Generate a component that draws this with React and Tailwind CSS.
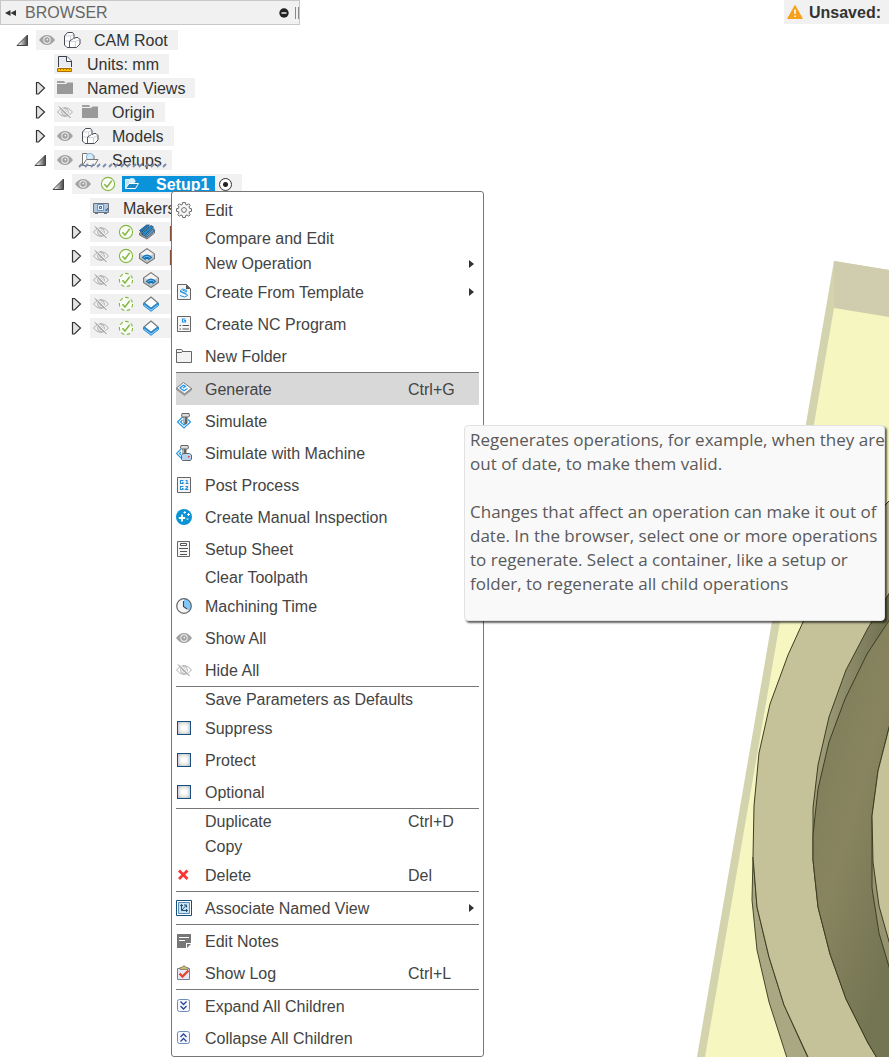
import React from "react";

/* ---------- icons ---------- */
function Svg({ children, className = "" }) {
  return (
    <svg viewBox="0 0 16 16" aria-hidden="true" className={"h-4 w-4 shrink-0 " + className}>
      {children}
    </svg>
  );
}

const Eye = () => (
  <Svg>
    <path d="M0 8 Q3.500 3 8 3 T16 8 Q12.500 13 8 13 T0 8Z" fill="#a3a3a3" />
    <circle cx="8" cy="8" r="3.700" fill="#f4f4f4" />
    <circle cx="8" cy="8" r="2.700" fill="#a0a0a0" />
    <circle cx="8.300" cy="7.600" r="0.900" fill="#f4f4f4" />
  </Svg>
);

const EyeOff = () => (
  <Svg>
    <g fill="none" stroke="#a6a6a6" strokeWidth="0.900">
      <path d="M0.500 8 Q4 3.500 8 3.500 T15.500 8 Q12 12.500 8 12.500 T0.500 8Z" />
      <circle cx="8" cy="8" r="3.400" />
      <circle cx="8" cy="8" r="1.300" />
    </g>
    <path d="M3.200 2.500L14 13.300" stroke="#f4f4f4" strokeWidth="1.200" />
    <path d="M2 2.500L13.500 14" stroke="#888" strokeWidth="1" />
  </Svg>
);

const Cubes = () => (
  <Svg className="overflow-visible">
    <path d="M0.500 4L3.500 0.500H8.500L10 2.500V6.500L12 5.500H14L16 7.500V12L12.500 15.500H3L0.500 13Z" fill="#fff" />
    <path d="M0.500 4H6.500L10 2.500M6.500 4V9.500M0.500 9H5.500M6 9.500H11.500L16 7.500M11.500 9.500V15.500" fill="none" stroke="#cfd1d6" />
    <path d="M0.500 13V4L3.500 0.500H8.500L10 2.500V6.500L12 5.500H14L16 7.500V12L12.500 15.500H3L0.500 13" fill="none" stroke="#4a4d57" />
    <path d="M5.500 9V15M5.500 9L9.500 6.500" fill="none" stroke="#4a4d57" strokeWidth="0.900" />
  </Svg>
);

const Units = () => (
  <Svg>
    <path d="M1.500 11V0.500H10L14.500 5V11" fill="#e9ecf4" stroke="#3c3f4a" />
    <path d="M9.500 0.500V5.500H14.500" fill="#fff" stroke="#3c3f4a" />
    <path d="M0.500 12.500H14.500V15.500H0.500Z" fill="#ffc400" stroke="#b06a00" />
    <path d="M3.500 13V14M6.500 13V14M9.500 13V14M12.500 13V14" stroke="#b06a00" />
  </Svg>
);

const FolderGray = () => (
  <Svg>
    <path d="M0 1H7L8.500 3H0Z" fill="#a0a0a0" />
    <path d="M0 4H9L10.500 2.500H16V14H0Z" fill="#999" />
  </Svg>
);

const FolderOpen = () => (
  <Svg className="overflow-visible">
    <path d="M0.500 13.500V1.500H5L6.500 3.500H12V7" fill="#fafafa" stroke="#777" />
    <circle cx="8" cy="5" r="3.600" fill="#d8ebfa" stroke="#7db2dc" />
    <path d="M0.500 13.500L4.500 7.500H16L12.500 13.500Z" fill="#f6f6f6" stroke="#777" />
  </Svg>
);

const FolderActive = () => (
  <Svg className="overflow-visible">
    <path d="M1.500 12.500V3.500H5L6.500 4.500H11V6" fill="#bfe3f7" stroke="#eaf6fd" />
    <circle cx="8" cy="5" r="3" fill="#d8effb" />
    <path d="M1.500 12.500L5 7.500H14.500L11.500 12.500Z" fill="#1b87c4" stroke="#fff" />
  </Svg>
);

const Check = ({ dashed }) => (
  <Svg>
    <circle cx="8" cy="8" r="6.600" fill="#fbfdf8" stroke="#84b840" strokeWidth="1.100" strokeDasharray={dashed ? "3.600 2.400" : undefined} />
    <path d="M4.300 8.300L7 11L11.700 4.800" fill="none" stroke="#84b840" strokeWidth="1.500" />
  </Svg>
);

const Machine = () => (
  <Svg>
    <path d="M0.500 3.500H15.500V12.500H0.500Z" fill="#b3c6dc" stroke="#6b7582" />
    <path d="M2 13H5V14H2ZM11 13H14V14H11Z" fill="#6b7582" />
    <path d="M4.500 4.500H10.500V10.500H4.500Z" fill="#e2efff" stroke="#6a96c8" />
    <path d="M6.500 6.500H8.500V8.500H6.500Z" fill="#cfe2f8" stroke="#3d6fa8" />
    <path d="M12.500 9H14.500V11H12.500Z" fill="#3f78b5" />
    <path d="M14 8H15V9.500H14Z" fill="#d0452f" />
  </Svg>
);

const OpFace = () => (
  <Svg>
    <path d="M0.500 9L8 2L15.500 6V9L8 15L0.500 11Z" fill="#999b9e" stroke="#707276" />
    <path d="M0.500 6.500L7.500 1H10.500L2.500 8.500Z" fill="#1f78b8" stroke="#114b78" strokeWidth=".7" />
    <path d="M2.500 10L12 1.500L14.500 3L5.500 11.500Z" fill="#2589cc" stroke="#114b78" strokeWidth=".8" />
    <path d="M6 12.500L15 4.500V7L8 13Z" fill="#5dafe4" stroke="#164f7b" strokeWidth=".7" />
  </Svg>
);

const OpPocket = () => (
  <Svg>
    <path d="M0.500 6L8 0.700L15.500 6V10.500L8 15.500L0.500 10.500Z" fill="#c9c9c9" stroke="#777" strokeWidth="1.100" />
    <path d="M1.500 6L8 1.500L14.500 6L8 9Z" fill="#f4f4f4" />
    <path d="M2.500 9.500Q8 3.500 13.500 9.500L8 13.500Z" fill="#1673b5" />
    <path d="M4.500 10Q8 6.500 11.500 10" fill="none" stroke="#70c1f2" strokeWidth="1" />
    <path d="M6 12Q8 10 10 12L8 13.500Z" fill="#c8cdd1" />
  </Svg>
);

const OpContour = () => (
  <Svg>
    <path d="M0.500 7.500V9.500L8 15.300L15.500 9.500V7.500L8 13Z" fill="#8fd0fa" stroke="#218cd6" />
    <path d="M1 7L8 1L15 7L8 12.500Z" fill="#fff" stroke="#777" strokeWidth="1.200" />
    <path d="M1 7L8 12.500L15 7" fill="none" stroke="#218cd6" strokeWidth="1.300" />
  </Svg>
);

const Gear = () => (
  <Svg>
    <path
      d="M6.700 0.500H9.300L9.700 2.500L11 3L12.700 1.800L14.200 3.300L13 5L13.500 6.300L15.500 6.700V9.300L13.500 9.700L13 11L14.200 12.700L12.700 14.200L11 13L9.700 13.500L9.300 15.500H6.700L6.300 13.500L5 13L3.300 14.200L1.800 12.700L3 11L2.500 9.700L0.500 9.300V6.700L2.500 6.300L3 5L1.800 3.300L3.300 1.800L5 3L6.300 2.500Z"
      fill="#f6f6f6"
      stroke="#6a6a6a"
      strokeWidth="1"
    />
    <circle cx="8" cy="8" r="2.400" fill="#fff" stroke="#6a6a6a" />
  </Svg>
);

const Template = () => (
  <Svg>
    <path d="M1.500 0.500H10.500L14.500 4.500V15.500H1.500Z" fill="#f3f3f3" stroke="#666" />
    <path d="M10 0.500L14.500 5H10Z" fill="#555" />
    <path d="M11 6.500L6.500 5L4 7L10 9.500L11.500 11.500L8.500 13L4 11.500M4 7.500L10.500 10.500M6.500 6L11 8" fill="none" stroke="#2196e8" strokeWidth="1" />
  </Svg>
);

const NcProgram = () => (
  <Svg>
    <path d="M1.500 0.500H14.500V15.500H1.500Z" fill="#f6f6f6" stroke="#666" />
    <path d="M9.500 3H6.500V6H9.500V4.500H8" fill="none" stroke="#2196e8" strokeWidth="1.200" />
    <path d="M3.500 9.500H5M6.500 9.500H13M3.500 13H5M6.500 13H13" stroke="#555" strokeWidth="1" />
  </Svg>
);

const NewFolder = () => (
  <Svg>
    <path d="M0.500 14.500V1.500H5.500L7 3.500H15.500V14.500Z" fill="#f3f3f3" stroke="#666" />
    <path d="M0.500 4.500H5.500L7 3" fill="none" stroke="#666" />
  </Svg>
);

const Generate = () => (
  <Svg>
    <path d="M0.500 7L7.500 1.500L15.500 7.500L9 13L7 12.500Z" fill="#fff" stroke="#777" />
    <path d="M0.500 7V8.500L8.500 14.500L15.500 9V7.500L8.500 12.500Z" fill="#a5a5a5" stroke="#777" strokeWidth=".6" />
    <path d="M7.500 4L4 7L8 9.800L11.500 7.500M7.500 4L9.500 5.500L7 7" fill="none" stroke="#2196f3" strokeWidth="1.300" />
  </Svg>
);

const Tool = () => (
  <g>
    <path d="M6 0.500H13L13.500 3L12.500 4H6.500L5.500 3Z" fill="#ddd" stroke="#666" />
    <path d="M7.500 4H11.500V10L9.500 11.500L7.500 10Z" fill="#666" />
    <path d="M8.500 4.500V9.500" stroke="#bbb" />
  </g>
);

const Simulate = () => (
  <Svg>
    <path d="M7.500 3L1.500 9L8 15L14.500 9L12 6.500M6.500 7L4.500 9L8 12L11 9.500" fill="none" stroke="#2b97e0" strokeWidth="1.200" />
    <Tool />
  </Svg>
);

const SimulateMachine = () => (
  <Svg>
    <path d="M5 4L0.500 8.500L5 13M5 7L3.500 8.500L5 10" fill="none" stroke="#2b97e0" strokeWidth="1.200" />
    <g transform="translate(-1 0)">
      <Tool />
    </g>
    <path d="M5.500 10.500L7 8.500H13.500L15.500 10V14L14.500 15.500H6.500L5.500 14.500Z" fill="#b4d3f2" stroke="#666" />
    <path d="M12 11H13.500V12.500H12Z" fill="#e33" />
  </Svg>
);

const PostProcess = () => (
  <Svg>
    <path d="M1.500 0.500H14.500V15.500H1.500Z" fill="#f4f4f4" stroke="#666" />
    <path d="M7.500 3.500H4.500V6.500H7V5.500H6M9.500 3.500H11V6.500M9.500 6.500H12.500M7.500 9.500H4.500V12.500H7V11.500H6M9.500 9.500H11.500V10.500L9.500 12.500H12.500" fill="none" stroke="#2492d8" strokeWidth="1.100" />
  </Svg>
);

const Inspection = () => (
  <Svg>
    <circle cx="8" cy="8" r="8" fill="#0a94d6" />
    <path d="M6 5.500V12.500M2.800 9H9.200" stroke="#fff" strokeWidth="1.800" />
    <path d="M7.500 3.500H10M8.700 2.200V4.700M11 5.500H14M12.500 4V7M10.500 10H12.500" stroke="#fff" strokeWidth="1" />
  </Svg>
);

const Sheet = () => (
  <Svg>
    <path d="M1.500 0.500H13.500V15.500H1.500Z" fill="#f6f6f6" stroke="#666" />
    <path d="M4.500 2.500H10.500V4.500H4.500Z" fill="#fff" stroke="#555" />
    <path d="M3 7.500H12M4 10.500H11M4 13.500H11" stroke="#555" />
  </Svg>
);

const Clock = () => (
  <Svg>
    <circle cx="8" cy="8" r="7.300" fill="#f5f5f5" />
    <path d="M8 8V0.700A7.300 7.300 0 0 1 13.200 13.200Z" fill="#80c7fb" />
    <circle cx="8" cy="8" r="7.300" fill="none" stroke="#666" strokeWidth="1.200" />
    <path d="M7.500 3V8.500L11 11" fill="none" stroke="#444" strokeWidth="1.100" />
  </Svg>
);

const Cross = () => (
  <Svg>
    <path d="M3 3.500L11.500 12M11.500 3.500L3 12" stroke="#fb3535" strokeWidth="2.800" />
  </Svg>
);

const NamedView = () => (
  <Svg>
    <path d="M0.500 0.500H15.500V15.500H0.500Z" fill="#fff" stroke="#174f7c" />
    <path d="M2.500 2.500H13.500V13.500H2.500Z" fill="#c6e3f5" stroke="#5d8db3" />
    <path d="M5.500 10.500V4.500M4 6L5.500 4.500L7 6M5.500 10.500H11.500M10 9L11.500 10.500L10 12M6 10L10 5.500M8 5H10.500V7.500" fill="none" stroke="#123c60" strokeWidth="0.900" />
  </Svg>
);

const Notes = () => (
  <Svg>
    <path d="M1 1H15V10H10V15H1Z" fill="#777" />
    <path d="M3 4.500H13M3 7.500H9" stroke="#fff" />
    <path d="M11 11H15L11 15Z" fill="#777" />
  </Svg>
);

const Log = () => (
  <Svg>
    <path d="M1.500 3.500H13.500V14.500H1.500Z" fill="#e7e9f6" stroke="#7a7f96" />
    <path d="M4 4.500V2.500H6L7 1H9L10 2.500H12V4.500Z" fill="#c9bb80" stroke="#85794c" strokeWidth=".8" />
    <path d="M3.500 8.500L6.500 11.500L12.500 5.500" fill="none" stroke="#e4472b" strokeWidth="2.400" />
  </Svg>
);

const Chevrons = ({ up }) => (
  <Svg>
    <rect x="1.500" y="1.500" width="12" height="12" rx="2" fill="#f4f8fe" stroke="#6d8cba" />
    <path
      d={up ? "M4.500 7L7.500 4L10.500 7M4.500 11.500L7.500 8.500L10.500 11.500" : "M4.500 3.500L7.500 6.500L10.500 3.500M4.500 8L7.500 11L10.500 8"}
      fill="none"
      stroke="#2a459b"
      strokeWidth="1.300"
    />
  </Svg>
);

/* ---------- browser tree ---------- */
function Toggle({ open, label }) {
  return (
    <button type="button" aria-label={label} aria-expanded={open} className="flex h-5 w-5 shrink-0 items-center">
      <svg viewBox="0 0 14 16" aria-hidden="true" className="h-4 w-3.5">
        <defs>
          <linearGradient id="tg">
            <stop offset="0.200" stopColor="#eee" />
            <stop offset="1" stopColor="#444" />
          </linearGradient>
        </defs>
        {open ? (
          <path d="M1 13.500L11.500 3V13.500Z" fill="url(#tg)" stroke="#444" />
        ) : (
          <path d="M2.500 2.500H4.500L10.500 8L4.500 14H2.500Z" fill="#e4e4e4" stroke="#333" strokeWidth="1.200" />
        )}
      </svg>
    </button>
  );
}

const indents = ["pl-4", "pl-[34px]", "pl-[52px]", "pl-[70px]"];

function Row({ level, open, leaf, name, icons = [], children, wide }) {
  return (
    <li className={"flex h-5 items-center " + indents[level]}>
      {leaf ? <span className="w-5" /> : <Toggle open={!!open} label={"Toggle " + name} />}
      <div className={"relative flex h-5 items-center bg-[#f1f1f1] pr-2.5 pl-[3px] " + (wide ? "min-w-24" : "")}>
        <span className="flex items-center gap-[9px]">{icons}</span>
        {children || <span className="ml-3.5 pt-0.5 whitespace-nowrap">{name}</span>}
      </div>
    </li>
  );
}

function Squiggle() {
  return (
    <svg aria-hidden="true" className="absolute bottom-0.5 left-6 h-1.5 w-[90px]" viewBox="0 0 90 6">
      <path
        d="M1 5L4 2M7 5L10 2M13 5L16 2M19 5L22 2M25 5L28 2M31 5L34 2M37 5L40 2M43 5L46 2M49 5L52 2M55 5L58 2M61 5L64 2M67 5L70 2M73 5L76 2M79 5L82 2M85 5L88 2"
        stroke="#7c8db4"
        strokeWidth="2"
      />
    </svg>
  );
}

function Operation({ name, icon, dashed }) {
  return (
    <Row level={3} name={name || "operation"} wide icons={[<EyeOff key="e" />, <Check key="c" dashed={dashed} />]}>
      <span className={dashed ? "ml-[9px]" : "ml-[5px]"}>{icon}</span>
      {name && <span className="ml-3.5 pt-0.5">{name}</span>}
    </Row>
  );
}

function Tree() {
  return (
    <ul className="flex flex-col gap-1 pt-[5px]">
      <Row level={0} open name="CAM Root" icons={[<Eye key="e" />, <Cubes key="i" />]} />
      <Row level={1} leaf name="Units: mm" icons={[<Units key="i" />]} />
      <Row level={1} name="Named Views" icons={[<FolderGray key="i" />]} />
      <Row level={1} name="Origin" icons={[<EyeOff key="e" />, <FolderGray key="i" />]} />
      <Row level={1} name="Models" icons={[<Eye key="e" />, <Cubes key="i" />]} />
      <Row level={1} open name="Setups" icons={[<Eye key="e" />, <FolderOpen key="i" />]}>
        <span className="ml-3.5 pt-0.5">Setups</span>
        <Squiggle />
      </Row>
      <Row level={2} open name="Setup1" icons={[<Eye key="e" />, <Check key="c" />]}>
        <span className="ml-1.5 flex h-4 items-center bg-[#0a93db] pr-1.5 pl-0.5 font-bold text-white">
          <FolderActive />
          <span className="ml-4 pt-0.5">Setup1</span>
        </span>
        <input
          type="radio"
          name="active-setup"
          aria-label="Activate Setup1"
          defaultChecked
          className="ml-1 h-[13px] w-[13px] appearance-none rounded-full border border-[#333] bg-[radial-gradient(circle,#222_0_2px,#fff_3px)]"
        />
      </Row>
      <Row level={3} leaf wide name="Makers" icons={[<Machine key="i" />]} />
      <Operation name="[" icon={<OpFace />} />
      <Operation name="[" icon={<OpPocket />} />
      <Operation dashed icon={<OpPocket />} />
      <Operation dashed icon={<OpContour />} />
      <Operation dashed icon={<OpContour />} />
    </ul>
  );
}

/* ---------- context menu ---------- */
const groups = [
  [
    { label: "Edit", icon: <Gear /> },
    { label: "Compare and Edit" },
    { label: "New Operation", sub: true },
    { label: "Create From Template", icon: <Template />, sub: true },
    { label: "Create NC Program", icon: <NcProgram /> },
    { label: "New Folder", icon: <NewFolder /> },
  ],
  [
    { label: "Generate", icon: <Generate />, keys: "Ctrl+G", active: true },
    { label: "Simulate", icon: <Simulate /> },
    { label: "Simulate with Machine", icon: <SimulateMachine /> },
    { label: "Post Process", icon: <PostProcess /> },
    { label: "Create Manual Inspection", icon: <Inspection /> },
    { label: "Setup Sheet", icon: <Sheet /> },
    { label: "Clear Toolpath" },
    { label: "Machining Time", icon: <Clock /> },
    { label: "Show All", icon: <Eye /> },
    { label: "Hide All", icon: <EyeOff /> },
  ],
  [
    { label: "Save Parameters as Defaults" },
    { label: "Suppress", check: true },
    { label: "Protect", check: true },
    { label: "Optional", check: true },
  ],
  [
    { label: "Duplicate", keys: "Ctrl+D" },
    { label: "Copy" },
    { label: "Delete", icon: <Cross />, keys: "Del" },
  ],
  [{ label: "Associate Named View", icon: <NamedView />, sub: true }],
  [
    { label: "Edit Notes", icon: <Notes /> },
    { label: "Show Log", icon: <Log />, keys: "Ctrl+L" },
  ],
  [
    { label: "Expand All Children", icon: <Chevrons /> },
    { label: "Collapse All Children", icon: <Chevrons up /> },
  ],
];

function Item({ label, icon, keys, sub, active, check }) {
  if (check) {
    return (
      <label className="flex h-8 items-center gap-3.5 pl-px">
        <input
          type="checkbox"
          className="h-3.5 w-3.5 appearance-none border border-[#1b4f80] bg-white shadow-[inset_0_0_4px_#999]"
        />
        <span className="pt-0.5">{label}</span>
      </label>
    );
  }
  const drop = icon ? "pt-0.5 " : "";
  return (
    <button
      type="button"
      className={
        "flex w-full items-center text-left whitespace-nowrap " +
        (icon ? "h-8 " : "h-[25px] ") +
        (active ? "bg-[#d8d8d8]" : "hover:bg-[#d8d8d8]")
      }
    >
      <span className="w-[29px] shrink-0">{icon}</span>
      <span className={drop + "grow"}>{label}</span>
      {keys && <span className={drop + "w-[71px] shrink-0"}>{keys}</span>}
      {sub && (
        <svg viewBox="0 0 10 10" aria-hidden="true" className="h-2.5 w-2.5 shrink-0">
          <path d="M0 1L5 5L0 9Z" fill="#333" />
        </svg>
      )}
    </button>
  );
}

function ContextMenu() {
  return (
    <div className="absolute top-[191px] left-[171px] w-[313px] rounded-[3px] border border-[#777] bg-white px-1 py-0.5 text-[#444]">
      {groups.map((items, i) => (
        <div key={i} className={i ? "border-t border-[#777]" : ""}>
          {items.map((item) => (
            <Item key={item.label} {...item} />
          ))}
        </div>
      ))}
    </div>
  );
}

function Tooltip() {
  return (
    <div
      role="tooltip"
      className="absolute top-[425px] left-[464px] flex w-[421px] flex-col gap-6 rounded border border-[#e2e2e2] bg-[#f9f9f9] px-[5px] pt-0.5 pb-6 font-['Open_Sans','Noto_Sans',sans-serif] text-[17px] leading-6 whitespace-nowrap text-[#5a5a5a] shadow-[2px_2px_2px_rgba(0,0,0,0.6)]"
    >
      <p>
        Regenerates operations, for example, when they are
        <br />
        out of date, to make them valid.
      </p>
      <p>
        Changes that affect an operation can make it out of
        <br />
        date. In the browser, select one or more operations
        <br />
        to regenerate. Select a container, like a setup or
        <br />
        folder, to regenerate all child operations
      </p>
    </div>
  );
}

/* ---------- 3D viewport ---------- */
function Viewport() {
  return (
    <svg aria-hidden="true" viewBox="690 250 199 807" className="absolute top-[250px] right-0 h-[807px] w-[199px]">
      <defs>
        <linearGradient id="bore" x1="0" y1="0" x2="0.600" y2="1">
          <stop offset="0" stopColor="#7b7c59" />
          <stop offset="0.550" stopColor="#88845f" />
          <stop offset="1" stopColor="#747553" />
        </linearGradient>
        <linearGradient id="lip" x1="0" y1="0" x2="1" y2="0.400">
          <stop offset="0" stopColor="#aaa882" />
          <stop offset="1" stopColor="#66674a" />
        </linearGradient>
      </defs>
      <path d="M834 261L889 270V1057H697Z" fill="#d3d3ae" />
      <path d="M834 261L889 270V317L834 308Z" fill="#cfcdad" />
      <path d="M834 308L889 317V1057H705Z" fill="#f5f6c0" />
      <path d="M753 857L752 900L757 950L769 1002L787 1058H808L784 1005L769 957L757 907Z" fill="#aaa882" stroke="#45452b" />
      <path d="M889 501L885 505L840 562L803 622L788 655L770 704L759 753L754 806L753 857L757 907L769 957L784 1005L808 1057H889Z" fill="#c5c199" />
      <path d="M889 501L885 505L840 562L803 622L788 655L770 704L759 753L754 806L753 857L757 907L769 957L784 1005L808 1057" fill="none" stroke="#3d3d22" />
      <path d="M890 592L885 600L868 628L846 670L829 717L818 765L813 808V860L818 907L830 954L846 999L868 1043L877 1058H890Z" fill="url(#lip)" stroke="#3d3d22" />
      <path d="M890 619L867 654L845 699L829 742L818 789L813 835V860L818 907L830 954L846 999L868 1043L877 1058H890Z" fill="url(#bore)" stroke="#3d3d22" />
      <path d="M890 724L878 771L872 816V888L879 933L890 970Z" fill="#969370" stroke="#3d3d22" />
      <path d="M890 724L878 771L872 816L873 862L879 906L890 945Z" fill="#c5c199" stroke="#3d3d22" />
    </svg>
  );
}

export default function App() {
  return (
    <div className="relative min-h-screen overflow-hidden bg-white font-['Liberation_Sans',Arial,sans-serif] text-base leading-5 text-[#333]">
      <Viewport />
      <header className="flex items-start justify-between">
        <div className="flex h-[25px] w-[300px] items-center border border-[#c8c8c8] bg-[#f1f1f1] pl-1 text-[#666]">
          <button type="button" aria-label="Collapse browser">
            <svg viewBox="0 0 12 8" aria-hidden="true" className="h-2 w-3">
              <path d="M5.500 1V7L0 4ZM11 1V7L5.500 4Z" fill="#333" />
            </svg>
          </button>
          <h1 className="ml-2 grow">BROWSER</h1>
          <button type="button" aria-label="Minimize browser">
            <svg viewBox="0 0 10 10" aria-hidden="true" className="h-2.5 w-2.5">
              <circle cx="5" cy="5" r="4.700" fill="#222" />
              <path d="M2.500 5H7.500" stroke="#fff" strokeWidth="1.400" />
            </svg>
          </button>
          <span className="ml-1.5 h-3 w-1 border-x border-[#888]" />
        </div>
        <div className="relative flex h-6 items-center gap-1.5 bg-[#f1f1f1] pr-2 pl-[3px] font-bold">
          <svg viewBox="0 0 16 16" aria-hidden="true" className="h-4 w-4">
            <path d="M8 1.500L15.300 14.500H0.700Z" fill="#f9a01b" stroke="#f9a01b" strokeLinejoin="round" />
            <path d="M8 5.500V10M8 11.500V13" stroke="#fff" strokeWidth="1.600" />
          </svg>
          <span className="pt-0.5">Unsaved:</span>
        </div>
      </header>
      <Tree />
      <ContextMenu />
      <Tooltip />
    </div>
  );
}
